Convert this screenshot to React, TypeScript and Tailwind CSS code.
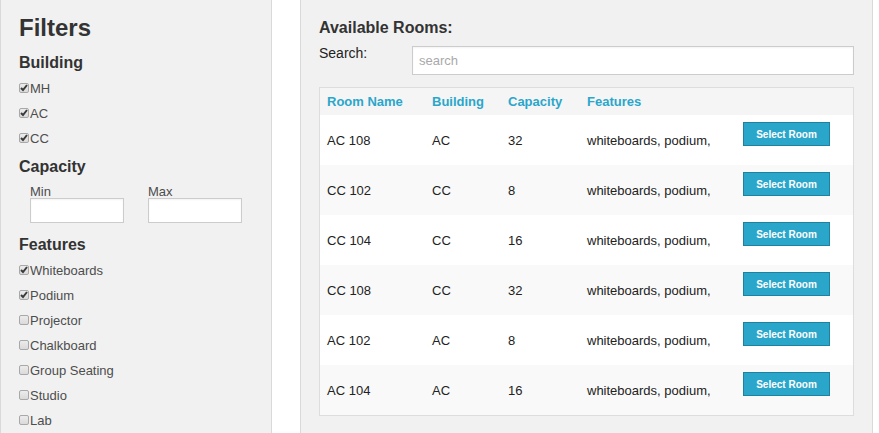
import { useState } from "react";

type Option = { name: string; checked: boolean };

const buildings: Option[] = [
  { name: "MH", checked: true },
  { name: "AC", checked: true },
  { name: "CC", checked: true },
];

const features: Option[] = [
  { name: "Whiteboards", checked: true },
  { name: "Podium", checked: true },
  { name: "Projector", checked: false },
  { name: "Chalkboard", checked: false },
  { name: "Group Seating", checked: false },
  { name: "Studio", checked: false },
  { name: "Lab", checked: false },
];

const rooms = [
  { name: "AC 108", building: "AC", capacity: 32 },
  { name: "CC 102", building: "CC", capacity: 8 },
  { name: "CC 104", building: "CC", capacity: 16 },
  { name: "CC 108", building: "CC", capacity: 32 },
  { name: "AC 102", building: "AC", capacity: 8 },
  { name: "AC 104", building: "AC", capacity: 16 },
];

function CheckRow({ option }: { option: Option }) {
  const [checked, setChecked] = useState(option.checked);
  return (
    <li>
      <label className="flex h-[25px] items-center gap-px text-[13px] text-[#4d4d4d]">
        <span className="mb-0.5 grid size-[10px] shrink-0">
          <input
            type="checkbox"
            checked={checked}
            onChange={(e) => setChecked(e.target.checked)}
            className="col-start-1 row-start-1 size-[10px] appearance-none rounded-[2px] border border-[#a8a8a8] bg-linear-to-b from-[#ececec] to-[#dadada]"
          />
          {checked && (
            <svg
              viewBox="0 0 10 10"
              className="pointer-events-none col-start-1 row-start-1 size-[10px]"
              fill="none"
              stroke="#3a3a3a"
              strokeWidth="2"
              aria-hidden="true"
            >
              <path d="M2 5 L4 7 L8 2" />
            </svg>
          )}
        </span>
        {option.name}
      </label>
    </li>
  );
}

function CheckList({ options }: { options: Option[] }) {
  return (
    <ul className="mt-px">
      {options.map((o) => (
        <CheckRow key={o.name} option={o} />
      ))}
    </ul>
  );
}

function NumberField({ id, label }: { id: string; label: string }) {
  return (
    <div className="flex min-w-0 flex-1 flex-col">
      <label htmlFor={id} className="text-[13px] leading-none text-[#4d4d4d]">
        {label}
      </label>
      <input
        id={id}
        type="text"
        className="h-[25px] w-full border border-[#ccc] bg-white px-1.5 text-[13px] shadow-[inset_0_1px_2px_rgba(0,0,0,0.05)]"
      />
    </div>
  );
}

export default function App() {
  return (
    <div className="flex min-h-screen gap-7 bg-white pr-1.5 font-['Liberation_Sans',Arial,sans-serif] text-[#222]">
      <aside className="w-[272px] shrink-0 border-x border-[#d9d9d9] bg-[#f1f1f1] px-[18px] pt-3">
        <h2 className="text-2xl leading-8 font-bold text-[#333]">Filters</h2>
        <h3 className="mt-[7px] text-base leading-6 font-bold text-[#333]">Building</h3>
        <CheckList options={buildings} />
        <h3 className="mt-1 text-base leading-6 font-bold text-[#333]">Capacity</h3>
        <div className="mt-1.5 flex gap-6 px-[11px]">
          <NumberField id="min" label="Min" />
          <NumberField id="max" label="Max" />
        </div>
        <h3 className="mt-2.5 text-base leading-6 font-bold text-[#333]">Features</h3>
        <CheckList options={features} />
      </aside>

      <main className="min-w-0 flex-1 border-x border-[#d9d9d9] bg-[#f1f1f1] px-[18px] pt-4">
        <h3 className="text-base leading-6 font-bold text-[#333]">Available Rooms:</h3>
        <div className="mt-1.5 flex items-start">
          <label htmlFor="search" className="w-[93px] text-sm leading-[14px]">
            Search:
          </label>
          <input
            id="search"
            type="text"
            placeholder="search"
            className="h-[29px] min-w-0 flex-1 border border-[#ccc] bg-white px-1.5 text-[13px] shadow-[inset_0_1px_2px_rgba(0,0,0,0.05)] placeholder:text-[#a9a9a9]"
          />
        </div>

        <div className="mt-3 border border-[#ddd] bg-white">
          <table className="w-full table-fixed text-left text-[13px]">
            <colgroup>
              <col className="w-[105px]" />
              <col className="w-[76px]" />
              <col className="w-[79px]" />
              <col className="w-[156px]" />
              <col />
            </colgroup>
            <thead className="bg-[#f5f5f5] text-[#2ba6cb]">
              <tr className="h-[27px]">
                <th className="px-[7px] py-0 font-bold">Room Name</th>
                <th className="px-[7px] py-0 font-bold">Building</th>
                <th className="px-[7px] py-0 font-bold">Capacity</th>
                <th className="px-[7px] py-0 font-bold">Features</th>
                <td />
              </tr>
            </thead>
            <tbody>
              {rooms.map((r) => (
                <tr key={r.name} className="h-[50px] even:bg-[#f9f9f9]">
                  <td className="px-[7px] pt-0.5 pb-0">{r.name}</td>
                  <td className="px-[7px] pt-0.5 pb-0">{r.building}</td>
                  <td className="px-[7px] pt-0.5 pb-0">{r.capacity}</td>
                  <td className="px-[7px] pt-0.5 pb-0 whitespace-nowrap">whiteboards, podium,</td>
                  <td className="px-[7px] pt-[7px] pb-0 align-top">
                    <button
                      type="button"
                      className="block h-6 w-[87px] border border-[#1e81a0] bg-[#2ba6cb] pt-0.5 text-center text-[10px] leading-none font-bold whitespace-nowrap text-white"
                    >
                      Select Room
                    </button>
                  </td>
                </tr>
              ))}
            </tbody>
          </table>
        </div>
      </main>
    </div>
  );
}
